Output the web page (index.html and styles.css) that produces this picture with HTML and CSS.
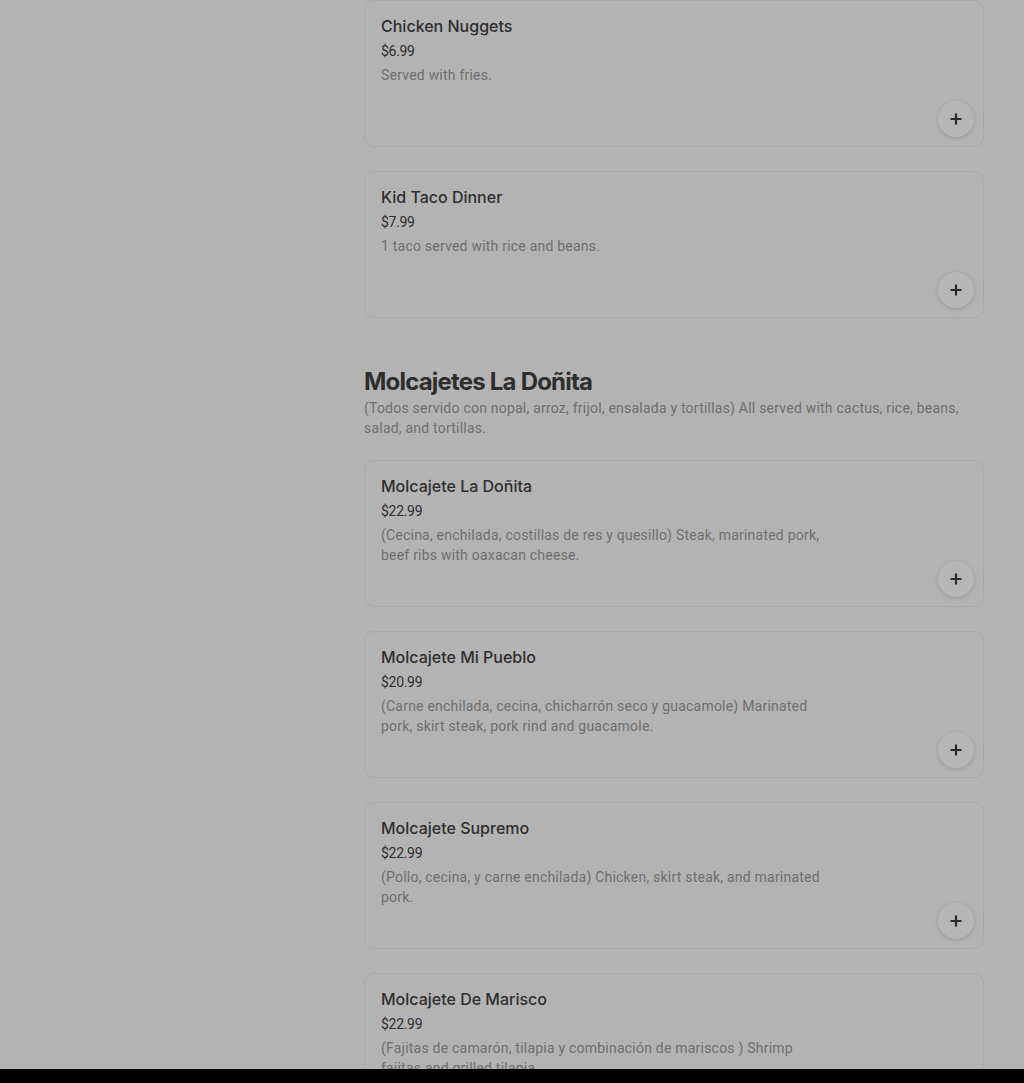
FILE: index.html
```html
<!DOCTYPE html>
<html lang="en">
<head>
    <meta charset="UTF-8">
    <meta name="viewport" content="width=device-width, initial-scale=1.0">
    <title>Menu</title>
    <link rel="stylesheet" href="styles.css">
</head>
<body>
    <div class="page">
        <aside class="sidebar"></aside>

        <main class="menu">
            <div class="item-list">
                <div class="item">
                    <h3>Chicken Nuggets</h3>
                    <div class="price">$6.99</div>
                    <p class="desc">Served with fries.</p>
                    <button class="add-button" aria-label="Add">
                        <svg width="14" height="14" viewBox="0 0 14 14"><path d="M7 1.5v11M1.5 7h11" stroke="currentColor" stroke-width="2.2"/></svg>
                    </button>
                </div>

                <div class="item">
                    <h3>Kid Taco Dinner</h3>
                    <div class="price">$7.99</div>
                    <p class="desc">1 taco served with rice and beans.</p>
                    <button class="add-button" aria-label="Add">
                        <svg width="14" height="14" viewBox="0 0 14 14"><path d="M7 1.5v11M1.5 7h11" stroke="currentColor" stroke-width="2.2"/></svg>
                    </button>
                </div>
            </div>

            <section class="section">
                <div class="section-header">
                    <h2>Molcajetes La Doñita</h2>
                    <p>(Todos servido con nopal, arroz, frijol, ensalada y tortillas) All served with cactus, rice, beans, salad, and tortillas.</p>
                </div>

                <div class="item-list">
                    <div class="item">
                        <h3>Molcajete La Doñita</h3>
                        <div class="price">$22.99</div>
                        <p class="desc">(Cecina, enchilada, costillas de res y quesillo) Steak, marinated pork, beef ribs with oaxacan cheese.</p>
                        <button class="add-button" aria-label="Add">
                            <svg width="14" height="14" viewBox="0 0 14 14"><path d="M7 1.5v11M1.5 7h11" stroke="currentColor" stroke-width="2.2"/></svg>
                        </button>
                    </div>

                    <div class="item">
                        <h3>Molcajete Mi Pueblo</h3>
                        <div class="price">$20.99</div>
                        <p class="desc">(Carne enchilada, cecina, chicharrón seco y guacamole) Marinated pork, skirt steak, pork rind and guacamole.</p>
                        <button class="add-button" aria-label="Add">
                            <svg width="14" height="14" viewBox="0 0 14 14"><path d="M7 1.5v11M1.5 7h11" stroke="currentColor" stroke-width="2.2"/></svg>
                        </button>
                    </div>

                    <div class="item">
                        <h3>Molcajete Supremo</h3>
                        <div class="price">$22.99</div>
                        <p class="desc">(Pollo, cecina, y carne enchilada) Chicken, skirt steak, and marinated pork.</p>
                        <button class="add-button" aria-label="Add">
                            <svg width="14" height="14" viewBox="0 0 14 14"><path d="M7 1.5v11M1.5 7h11" stroke="currentColor" stroke-width="2.2"/></svg>
                        </button>
                    </div>

                    <div class="item">
                        <h3>Molcajete De Marisco</h3>
                        <div class="price">$22.99</div>
                        <p class="desc">(Fajitas de camarón, tilapia y combinación de mariscos ) Shrimp fajitas and grilled tilapia.</p>
                        <button class="add-button" aria-label="Add">
                            <svg width="14" height="14" viewBox="0 0 14 14"><path d="M7 1.5v11M1.5 7h11" stroke="currentColor" stroke-width="2.2"/></svg>
                        </button>
                    </div>
                </div>
            </section>
        </main>
    </div>

    <div class="bottom-bar"></div>
</body>
</html>
```

FILE: styles.css
```css
* {
    box-sizing: border-box;
    margin: 0;
    padding: 0;
    font-family: Roboto, 'Noto Sans', sans-serif;
}

body {
    background-color: #b3b3b3;
    color: #2e2e2e;
    overflow: hidden;
    height: 1083px;
}

.page {
    display: grid;
    grid-template-columns: 364px 620px;
}

.item-list {
    display: flex;
    flex-direction: column;
    gap: 24px;
}

.item {
    position: relative;
    height: 147px;
    padding: 13px 16px 0;
    border: 1px solid #a9a9a9;
    border-radius: 10px;
}

.item h3 {
    font-family: Inter, sans-serif;
    font-size: 16px;
    font-weight: 500;
    line-height: 24px;
    color: #2e2e2e;
}

.price {
    font-size: 14px;
    line-height: 24px;
    color: #2e2e2e;
    letter-spacing: -0.3px;
    margin-top: 1px;
}

.desc {
    max-width: 452px;
    font-size: 14px;
    line-height: 20px;
    letter-spacing: 0.22px;
    color: #6e6e6e;
    margin-top: 2px;
}

.add-button {
    position: absolute;
    right: 9px;
    bottom: 9px;
    width: 36px;
    height: 36px;
    border: none;
    border-radius: 50%;
    background-color: #b6b6b6;
    color: #2a2a2a;
    box-shadow: 0 1px 4px rgba(0, 0, 0, 0.16);
    display: flex;
    align-items: center;
    justify-content: center;
    cursor: pointer;
}

.section {
    margin-top: 48px;
}

.section-header {
    margin-bottom: 22px;
}

.section-header h2 {
    font-family: Inter, sans-serif;
    font-size: 24px;
    font-weight: 700;
    letter-spacing: -0.8px;
    line-height: 32px;
    color: #2e2e2e;
}

.section-header p {
    font-size: 14px;
    line-height: 20px;
    letter-spacing: 0.22px;
    color: #6e6e6e;
}

.bottom-bar {
    position: fixed;
    left: 0;
    right: 0;
    bottom: 0;
    height: 14px;
    background-color: #000;
}
```
